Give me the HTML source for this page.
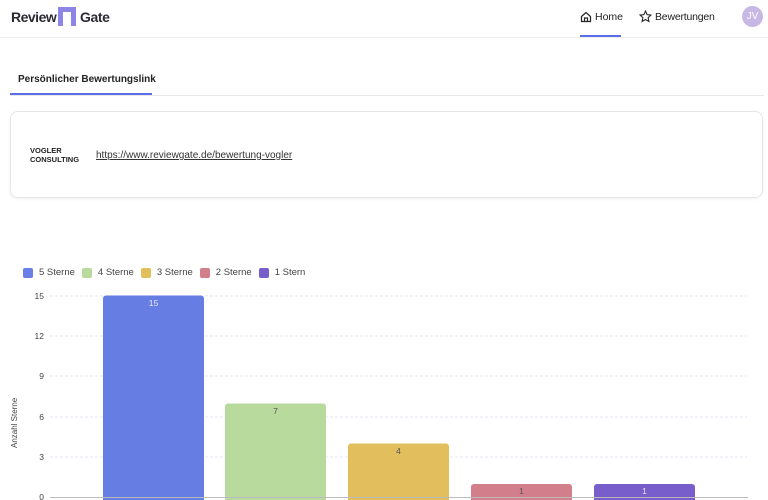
<!DOCTYPE html>
<html><head><meta charset="utf-8"><style>
*{margin:0;padding:0;box-sizing:border-box}
body{width:768px;height:500px;overflow:hidden;background:#fff;font-family:"Liberation Sans",sans-serif;color:#222;position:relative}
.a{position:absolute}
</style></head><body>
<div class="a" style="left:0;top:37px;width:768px;height:1px;background:#eee"></div>
<div class="a" style="left:11px;top:9px;font-size:14px;font-weight:bold;color:#2a2a33;letter-spacing:-0.5px">Review</div>
<svg class="a" style="left:58px;top:7px" width="18" height="19"><path d="M0 0H18V19H13V5H5V19H0Z" fill="#8d86e6"/></svg>
<div class="a" style="left:80px;top:9px;font-size:14px;font-weight:bold;color:#2a2a33;letter-spacing:-0.4px">Gate</div>
<svg class="a" style="left:580px;top:11px" width="12" height="12" viewBox="0 0 12 12" fill="none" stroke="#222" stroke-width="1.2"><path d="M1.5 5.5L6 1.5L10.5 5.5V10.5H1.5Z M4.5 10.5V7H7.5V10.5"/></svg>
<div class="a" style="left:595px;top:11px;font-size:10.5px">Home</div>
<div class="a" style="left:580px;top:35px;width:41px;height:2px;background:#5b6ee8"></div>
<svg class="a" style="left:639px;top:10px" width="13" height="13" viewBox="0 0 24 24" fill="none" stroke="#222" stroke-width="2"><path d="M12 2l3 6.5 7 .8-5.2 4.8 1.5 7L12 17.5 5.7 21.1l1.5-7L2 9.3l7-.8z"/></svg>
<div class="a" style="left:655px;top:11px;font-size:10.5px;letter-spacing:-0.2px">Bewertungen</div>
<div class="a" style="left:742px;top:6px;width:21px;height:21px;border-radius:50%;background:#c7b7e4;color:#fff;font-size:10px;text-align:center;line-height:21px">JV</div>
<div class="a" style="left:18px;top:74px;font-size:10px;font-weight:bold;color:#222">Persönlicher Bewertungslink</div>
<div class="a" style="left:10px;top:95px;width:754px;height:1px;background:#e8e8e8"></div>
<div class="a" style="left:10px;top:93px;width:142px;height:2px;background:#5b6ee8"></div>
<div class="a" style="left:10px;top:111px;width:753px;height:87px;border:1px solid #e6e6e6;border-radius:8px;box-shadow:0 1px 3px rgba(0,0,0,.06)"></div>
<div class="a" style="left:30px;top:146px;font-size:7.5px;font-weight:bold;line-height:9px;color:#222">VOGLER<br>CONSULTING</div>
<div class="a" style="left:96px;top:150px;font-size:10px;text-decoration:underline;color:#333">https://www.reviewgate.de/bewertung-vogler</div>
<div class="a" style="top:267px;left:23px;font-size:9.5px;color:#444;display:flex;align-items:center;white-space:nowrap">
<span style="width:10px;height:10px;border-radius:2px;background:#6a7fe6;margin-right:6px"></span>5 Sterne
<span style="width:10px;height:10px;border-radius:2px;background:#b8da9c;margin:0 6px 0 7px"></span>4 Sterne
<span style="width:10px;height:10px;border-radius:2px;background:#e2bf5c;margin:0 6px 0 7px"></span>3 Sterne
<span style="width:10px;height:10px;border-radius:2px;background:#d37e8b;margin:0 6px 0 7px"></span>2 Sterne
<span style="width:10px;height:10px;border-radius:2px;background:#775ecb;margin:0 6px 0 7px"></span>1 Stern
</div>
<svg class="a" style="left:0;top:0" width="768" height="500" font-family="Liberation Sans,sans-serif" font-size="8.5">
<g stroke="#e6e6f0" stroke-dasharray="3,2">
<line x1="50" y1="296" x2="747" y2="296"/><line x1="50" y1="336" x2="747" y2="336"/><line x1="50" y1="376" x2="747" y2="376"/><line x1="50" y1="417" x2="747" y2="417"/><line x1="50" y1="457" x2="747" y2="457"/>
</g>
<g fill="#444" text-anchor="end">
<text x="44" y="299">15</text><text x="44" y="339">12</text><text x="44" y="379">9</text><text x="44" y="420">6</text><text x="44" y="460">3</text><text x="44" y="500">0</text>
</g>
<text transform="translate(17,448) rotate(-90)" fill="#444" font-size="8">Anzahl Sterne</text>
<rect x="103" y="295.5" width="101" height="210" rx="3" fill="#667de4"/>
<rect x="225" y="403.5" width="101" height="100" rx="3" fill="#b8da9c"/>
<rect x="348" y="443.5" width="101" height="60" rx="3" fill="#e2bf5c"/>
<rect x="471" y="484" width="101" height="20" rx="3" fill="#d37e8b"/>
<rect x="594" y="484" width="101" height="20" rx="3" fill="#775ecb"/>
<g text-anchor="middle">
<text x="153.5" y="306" fill="#e8ecff">15</text>
<text x="275.5" y="414" fill="#555">7</text>
<text x="398.5" y="454" fill="#555">4</text>
<text x="521.5" y="494" fill="#555">1</text>
<text x="644.5" y="494" fill="#e8e6ff">1</text>
</g>
<line x1="50" y1="497.5" x2="748" y2="497.5" stroke="#bbb"/>
</svg>
</body></html>
